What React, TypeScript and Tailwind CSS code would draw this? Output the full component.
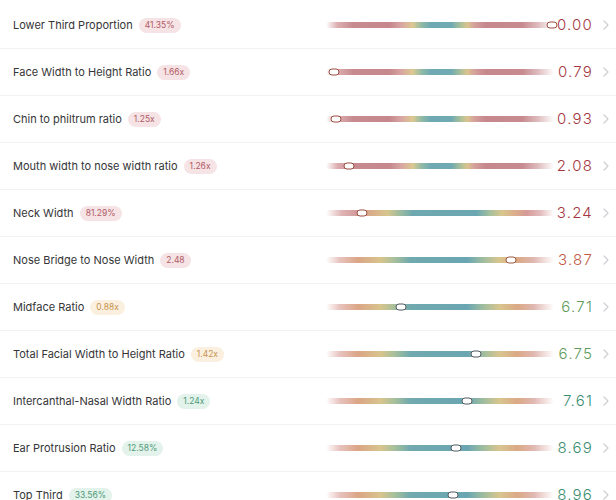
import React from "react";

type Tone = "red" | "orange" | "green" | "teal";

type Metric = {
  label: string;
  badge: string;
  badgeTone: "red" | "amber" | "green";
  value: string;
  tone: Tone;
  pos: number;
  scale: "red" | "mid" | "green";
};

const metrics: Metric[] = [
  { label: "Lower Third Proportion", badge: "41.35%", badgeTone: "red", value: "0.00", tone: "red", pos: 0.99, scale: "red" },
  { label: "Face Width to Height Ratio", badge: "1.66x", badgeTone: "red", value: "0.79", tone: "red", pos: 0.035, scale: "red" },
  { label: "Chin to philtrum ratio", badge: "1.25x", badgeTone: "red", value: "0.93", tone: "red", pos: 0.045, scale: "red" },
  { label: "Mouth width to nose width ratio", badge: "1.26x", badgeTone: "red", value: "2.08", tone: "red", pos: 0.1, scale: "red" },
  { label: "Neck Width", badge: "81.29%", badgeTone: "red", value: "3.24", tone: "red", pos: 0.16, scale: "mid" },
  { label: "Nose Bridge to Nose Width", badge: "2.48", badgeTone: "red", value: "3.87", tone: "orange", pos: 0.81, scale: "green" },
  { label: "Midface Ratio", badge: "0.88x", badgeTone: "amber", value: "6.71", tone: "green", pos: 0.33, scale: "green" },
  { label: "Total Facial Width to Height Ratio", badge: "1.42x", badgeTone: "amber", value: "6.75", tone: "green", pos: 0.66, scale: "green" },
  { label: "Intercanthal-Nasal Width Ratio", badge: "1.24x", badgeTone: "green", value: "7.61", tone: "teal", pos: 0.62, scale: "green" },
  { label: "Ear Protrusion Ratio", badge: "12.58%", badgeTone: "green", value: "8.69", tone: "teal", pos: 0.57, scale: "green" },
  { label: "Top Third", badge: "33.56%", badgeTone: "green", value: "8.96", tone: "teal", pos: 0.555, scale: "green" },
];

const scaleClass: Record<Metric["scale"], string> = {
  red: "bg-[linear-gradient(to_right,rgba(214,160,164,0)_0%,#dcaeb0_5%,#c78a8f_12%,#c6888d_28%,#d8a6a2_33%,#dcc890_38%,#8fbaa6_42%,#6ea9b3_46%,#70aab2_55%,#a9c09a_59%,#dbc48f_62%,#d5a19c_65%,#c6888d_70%,#c78a8f_86%,#dfbcbe_93%,rgba(230,200,202,0)_100%)]",
  mid: "bg-[linear-gradient(to_right,rgba(225,180,182,0)_0%,#e0b3b4_7%,#d09a98_14%,#d9ae8a_20%,#d8c68e_27%,#a0bd9d_32%,#6ea8b0_38%,#6ba7b2_66%,#a6c09c_72%,#d8c68f_77%,#dcae8c_83%,#d59a97_88%,#e3bcbe_94%,rgba(235,210,212,0)_100%)]",
  green: "bg-[linear-gradient(to_right,rgba(235,205,205,0)_0%,#e8c3bf_6%,#dba586_14%,#d8c48d_24%,#a7c09b_30%,#70a9ae_37%,#6aa6b2_62%,#9fbd9f_69%,#d8c58e_76%,#dba986_84%,#e0b7b1_91%,rgba(238,212,214,0)_100%)]",
};

const valueClass: Record<Tone, string> = {
  red: "text-[#a53741]",
  orange: "text-[#bf5a43]",
  green: "text-[#5e9b5c]",
  teal: "text-[#3b8d71]",
};

const badgeClass: Record<Metric["badgeTone"], string> = {
  red: "bg-[#f6e3e5] text-[#b15a64]",
  amber: "bg-[#fbf0df] text-[#c8924f]",
  green: "bg-[#e3f2ea] text-[#4f9b7c]",
};

const thumbBorder: Record<Tone, string> = {
  red: "border-[#9b4c3f]",
  orange: "border-[#9b5843]",
  green: "border-[#535a63]",
  teal: "border-[#535a63]",
};

function Chevron() {
  return (
    <svg width="6" height="10" viewBox="0 0 6 10" fill="none" className="shrink-0">
      <path d="M1 1l4 4-4 4" stroke="#cfcfd3" strokeWidth="1.2" strokeLinecap="round" strokeLinejoin="round" />
    </svg>
  );
}

function Row({ m }: { m: Metric }) {
  return (
    <div className="flex h-[47px] items-center border-b border-[#f3f2f3] pl-[13px] pr-[6px]">
      <div className="flex flex-1 items-center gap-[6px] min-w-0">
        <span className="text-[11px] text-[#353538] whitespace-nowrap">{m.label}</span>
        <span className={`rounded-full px-[6px] py-[2px] text-[8.5px] leading-[11px] ${badgeClass[m.badgeTone]}`}>
          {m.badge}
        </span>
      </div>
      <div className="relative h-[6px] w-[228px] shrink-0">
        <div className={`h-full w-full rounded-full ${scaleClass[m.scale]}`} />
        <div
          className={`absolute top-1/2 h-[7px] w-[11px] -translate-x-1/2 -translate-y-1/2 rounded-full border-[1.5px] bg-white ${thumbBorder[m.tone]}`}
          style={{ left: `${m.pos * 100}%` }}
        />
      </div>
      <div className={`w-[39px] shrink-0 text-right text-[15px] font-light tracking-[0.08em] ${valueClass[m.tone]}`}>
        {m.value}
      </div>
      <div className="ml-[9px] flex w-[8px] justify-center">
        <Chevron />
      </div>
    </div>
  );
}

export default function App() {
  return (
    <div
      className="h-[500px] w-[616px] overflow-hidden bg-white pt-[2px]"
      style={{ fontFamily: "Inter, 'Noto Sans', sans-serif" }}
    >
      {metrics.map((m) => (
        <Row key={m.label} m={m} />
      ))}
    </div>
  );
}
